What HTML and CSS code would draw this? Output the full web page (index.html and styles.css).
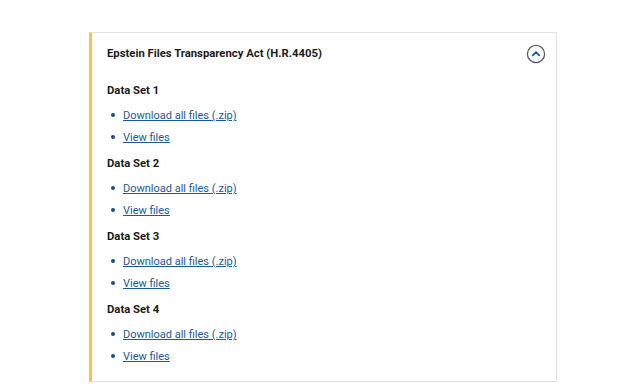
FILE: index.html
```html
<!DOCTYPE html>
<html lang="en">
<head>
    <meta charset="UTF-8">
    <meta name="viewport" content="width=device-width, initial-scale=1.0">
    <title>Epstein Files Transparency Act</title>
    <link rel="stylesheet" href="styles.css">
</head>
<body>
    <div class="accordion">
        <div class="accordion-header">
            <h2>Epstein Files Transparency Act (H.R.4405)</h2>
            <button class="toggle" aria-label="Collapse">
                <svg width="20" height="20" viewBox="0 0 20 20">
                    <circle cx="10" cy="10" r="8.6" fill="none" stroke="#565c65" stroke-width="1.3"/>
                    <path d="M6.8 11.4 L10 8.2 L13.2 11.4" fill="none" stroke="#1a5a96" stroke-width="1.8" stroke-linecap="round" stroke-linejoin="round"/>
                </svg>
            </button>
        </div>
        <div class="accordion-body">
            <h3>Data Set 1</h3>
            <ul>
                <li><a href="#">Download all files (.zip)</a></li>
                <li><a href="#">View files</a></li>
            </ul>
            <h3>Data Set 2</h3>
            <ul>
                <li><a href="#">Download all files (.zip)</a></li>
                <li><a href="#">View files</a></li>
            </ul>
            <h3>Data Set 3</h3>
            <ul>
                <li><a href="#">Download all files (.zip)</a></li>
                <li><a href="#">View files</a></li>
            </ul>
            <h3>Data Set 4</h3>
            <ul>
                <li><a href="#">Download all files (.zip)</a></li>
                <li><a href="#">View files</a></li>
            </ul>
        </div>
    </div>
</body>
</html>
```

FILE: styles.css
```css
body {
    margin: 0;
    background: #fff;
    font-family: Roboto, "Liberation Sans", sans-serif;
    color: #1b1b1b;
}
.accordion {
    margin: 32px 0 0 89px;
    width: 464px;
    border: 1px solid #dfe1e2;
    border-left: 3px solid #f8c541;
}
.accordion-header {
    display: flex;
    justify-content: space-between;
    align-items: center;
    padding: 9px 10px 12px 15px;
}
.accordion-header h2 {
    margin: 0;
    padding-top: 2px;
    font-size: 11.3px;
    line-height: 16px;
    font-weight: bold;
}
.toggle {
    border: none;
    background: none;
    padding: 0;
    width: 20px;
    height: 20px;
    display: block;
    margin-top: 2px;
}
.toggle svg {
    display: block;
}
.accordion-body {
    padding: 7px 16px 16px 15px;
}
.accordion-body h3 {
    margin: 0 0 9px;
    font-size: 11.3px;
    line-height: 16px;
    font-weight: bold;
}
.accordion-body ul {
    margin: 0 0 10px;
    padding-left: 16px;
    list-style: none;
}
.accordion-body ul:last-child {
    margin-bottom: 0;
}
.accordion-body li {
    font-size: 11px;
    line-height: 16px;
}
.accordion-body li::before {
    content: "";
    display: inline-block;
    width: 4px;
    height: 4px;
    border-radius: 50%;
    background: #1a4f7a;
    margin: 0 8px 0 -12px;
    vertical-align: 2px;
}
.accordion-body li + li {
    margin-top: 6px;
}
.accordion-body a {
    color: #1a5a96;
}
```
